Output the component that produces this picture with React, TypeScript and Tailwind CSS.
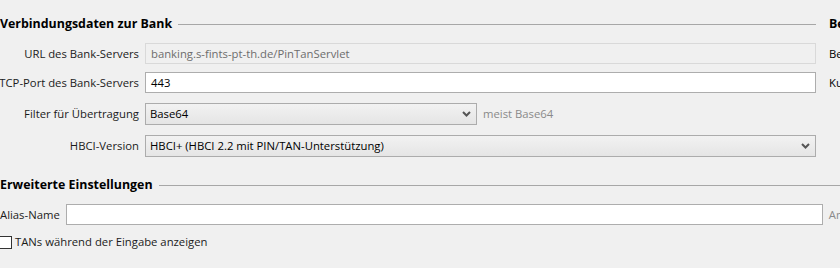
import React from 'react';

const Chevron = () => (
  <svg width="9" height="6" viewBox="0 0 9 6" className="shrink-0">
    <polyline points="1,1 4.5,4.5 8,1" fill="none" stroke="#555" strokeWidth="2" />
  </svg>
);

const Heading = ({ title, className = '' }: { title: string; className?: string }) => (
  <div className={`flex h-[16px] items-center ${className}`}>
    <span className="whitespace-nowrap text-[12.4px] font-bold text-[#000]">{title}</span>
    <div className="ml-[6px] h-px flex-1 bg-[#a7a7a7]" />
  </div>
);

const Label = ({ text }: { text: string }) => (
  <div className="flex w-[139px] shrink-0 justify-end whitespace-nowrap text-[#1b1b1b]">
    {text}
  </div>
);

const App = () => {
  return (
    <div
      className="h-[268px] w-[840px] overflow-hidden bg-[#f0f0f0] text-[11.3px] leading-none"
      style={{ fontFamily: '"Open Sans", "Noto Sans", sans-serif' }}
    >
      <div className="flex">
        {/* Verbindungsdaten */}
        <div className="w-[816px] shrink-0">
          <Heading title="Verbindungsdaten zur Bank" className="mt-[16px]" />

          <div className="mt-[11px] flex h-[21px] items-center">
            <Label text="URL des Bank-Servers" />
            <div className="ml-[6px] flex h-full flex-1 items-center border border-[#d9d9d9] bg-[#f0f0f0] pl-[5px] text-[#6d6d6d]">
              banking.s-fints-pt-th.de/PinTanServlet
            </div>
          </div>

          <div className="mt-[8px] flex h-[21px] items-center">
            <Label text="TCP-Port des Bank-Servers" />
            <div className="ml-[6px] flex h-full flex-1 items-center border border-[#adadad] bg-white pl-[5px] text-[#000]">
              443
            </div>
          </div>

          <div className="mt-[10px] flex h-[22px] items-center">
            <Label text="Filter für Übertragung" />
            <div className="ml-[6px] flex h-full w-[332px] items-center justify-between border border-[#acacac] bg-gradient-to-b from-[#f2f2f2] to-[#e5e5e5] pl-[4px] pr-[5px] text-[#000]">
              <span>Base64</span>
              <Chevron />
            </div>
            <span className="ml-[6px] whitespace-nowrap text-[#8a8a8a]">meist Base64</span>
          </div>

          <div className="mt-[10px] flex h-[22px] items-center">
            <Label text="HBCI-Version" />
            <div className="ml-[6px] flex h-full flex-1 items-center justify-between border border-[#acacac] bg-gradient-to-b from-[#f2f2f2] to-[#e5e5e5] pl-[4px] pr-[5px] text-[#000]">
              <span>HBCI+ (HBCI 2.2 mit PIN/TAN-Unterstützung)</span>
              <Chevron />
            </div>
          </div>
        </div>

        {/* cut-off right column */}
        <div className="ml-[13px] flex-1 overflow-hidden whitespace-nowrap">
          <div className="mt-[16px] flex h-[16px] items-center text-[12.4px] font-bold">Bearbeitung</div>
          <div className="mt-[11px] flex h-[21px] items-center">Benutzer</div>
          <div className="mt-[8px] flex h-[21px] items-center">Kunde</div>
        </div>
      </div>

      {/* Erweiterte Einstellungen */}
      <Heading title="Erweiterte Einstellungen" className="mt-[20px]" />

      <div className="mt-[11px] flex h-[21px] items-center">
        <span className="whitespace-nowrap text-[#1b1b1b]">Alias-Name</span>
        <div className="ml-[6px] h-full w-[757px] shrink-0 border border-[#adadad] bg-white" />
        <span className="ml-[6px] whitespace-nowrap text-[#8a8a8a]">Anzeigen</span>
      </div>

      <div className="mt-[10px] flex h-[14px] items-center">
        <div className="ml-[-1px] h-[13px] w-[13px] shrink-0 border border-[#333] bg-white" />
        <span className="ml-[3px] whitespace-nowrap text-[#1b1b1b]">TANs während der Eingabe anzeigen</span>
      </div>
    </div>
  );
};

export default App;
